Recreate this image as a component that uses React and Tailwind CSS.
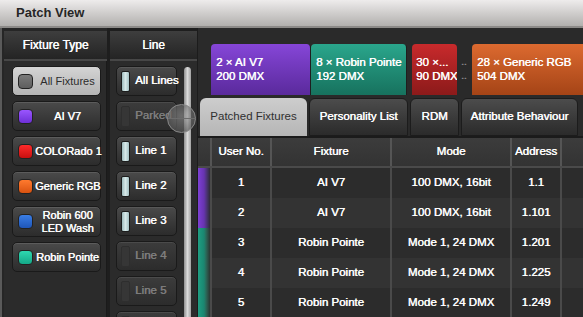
const fixtureTypes = [
  { name: 'All Fixtures', swatch: 'from-[#7a7a7a] to-[#5e5e5e]', active: true },
  { name: 'AI V7', swatch: 'from-[#9a55ff] to-[#6e2fd6]' },
  { name: 'COLORado 1', swatch: 'from-[#ff2a2a] to-[#c80f0f]' },
  { name: 'Generic RGB', swatch: 'from-[#ff7a2e] to-[#d9520f]' },
  { name: ['Robin 600', 'LED Wash'], swatch: 'from-[#3a7ee6] to-[#1f56b8]' },
  { name: 'Robin Pointe', swatch: 'from-[#2ed8b0] to-[#14a888]' },
]

const lines = [
  { name: 'All Lines', on: true },
  { name: 'Parked' },
  { name: 'Line 1', on: true },
  { name: 'Line 2', on: true },
  { name: 'Line 3', on: true },
  { name: 'Line 4' },
  { name: 'Line 5' },
  { name: '' },
]

const universes = [
  { label: '2 × AI V7', dmx: '200 DMX', w: 'w-[100px]', bg: 'from-[#8646d8] to-[#5a2a9c]' },
  { label: '8 × Robin Pointe', dmx: '192 DMX', w: 'w-[96px]', bg: 'from-[#2aa68c] to-[#17725e]' },
]

const purple = 'from-[#7d40d4] via-[#6733b0] to-[#2f2a36]'
const teal = 'from-[#1f9e82] via-[#1a8670] to-[#2a3532]'

const rows = [
  { no: 1, fixture: 'AI V7', mode: '100 DMX, 16bit', addr: '1.1', strip: purple },
  { no: 2, fixture: 'AI V7', mode: '100 DMX, 16bit', addr: '1.101', strip: purple },
  { no: 3, fixture: 'Robin Pointe', mode: 'Mode 1, 24 DMX', addr: '1.201', strip: teal },
  { no: 4, fixture: 'Robin Pointe', mode: 'Mode 1, 24 DMX', addr: '1.225', strip: teal },
  { no: 5, fixture: 'Robin Pointe', mode: 'Mode 1, 24 DMX', addr: '1.249', strip: teal },
]

// thickens the thin regular face a little, like the console's cleartype text
const heavy = '[text-shadow:0.45px_0_0_currentColor]'

function ColumnHeader({ children }) {
  return (
    <div className={`h-[30px] shrink-0 flex items-center justify-center bg-gradient-to-b from-[#3e3e3e] to-[#242424] border-b-2 border-[#474747] text-white text-[12px] ${heavy}`}>
      {children}
    </div>
  )
}

function FixtureButton({ item }) {
  const twoLine = Array.isArray(item.name)
  return (
    <div
      className={`w-[89px] ${twoLine ? 'h-[31px]' : 'h-[30px]'} shrink-0 rounded-[5px] border border-[#1a1a1a] flex items-center pl-[5px] ${
        item.active
          ? 'bg-gradient-to-b from-[#d4d4d4] to-[#b4b4b4] text-[#2c2c2c]'
          : `bg-gradient-to-b from-[#4a4a4a] to-[#2c2c2c] text-white ${heavy} shadow-[inset_0_1px_0_rgba(255,255,255,0.1)]`
      }`}
    >
      <div className={`w-[15px] h-[15px] shrink-0 rounded-[4px] border border-[#222] bg-gradient-to-b ${item.swatch}`} />
      <div className="flex-1 pl-[2px] text-center text-[11px] leading-[13px] whitespace-nowrap">
        {twoLine ? (
          <>
            <div>{item.name[0]}</div>
            <div>{item.name[1]}</div>
          </>
        ) : (
          item.name
        )}
      </div>
    </div>
  )
}

function LineButton({ item }) {
  return (
    <div
      className={`w-[61px] h-[30px] shrink-0 rounded-[5px] border border-[#1a1a1a] flex items-center pl-[4px] gap-[5px] shadow-[inset_0_1px_0_rgba(255,255,255,0.08)] ${
        item.on ? 'bg-gradient-to-b from-[#4a4a4a] to-[#2c2c2c] text-white' : 'bg-gradient-to-b from-[#3c3c3c] to-[#2c2c2c] text-[#7e7e7e]'
      }`}
    >
      <div
        className={`w-[9px] h-[21px] shrink-0 rounded-[2px] border ${
          item.on ? 'border-[#1c1c1c] bg-gradient-to-r from-[#9fbcbe] via-[#d6e8e8] to-[#a3c0c3]' : 'border-[#2e2e2e] bg-[#363636]'
        }`}
      />
      <span className={`text-[11.5px] whitespace-nowrap ${heavy}`}>{item.name}</span>
    </div>
  )
}

export default function App() {
  return (
    <div className="w-[583px] h-[317px] overflow-hidden bg-[#2b2b2b] font-['Liberation_Sans',Arial,sans-serif] flex flex-col">
      <div className="h-[28px] shrink-0 flex items-center pl-[16px] bg-gradient-to-b from-[#eeecec] to-[#b2b0ae] border-b-2 border-[#8c8a88] text-[13px] font-bold text-[#262626]">
        Patch View
      </div>

      <div className="flex flex-1 min-h-0">
        {/* fixture types */}
        <div className="w-[107px] shrink-0 flex flex-col border-l-[2px] border-[#5a5a5a] pl-[2px] pt-[3px] bg-[#262626]">
          <ColumnHeader>Fixture Type</ColumnHeader>
          <div className="flex-1 bg-[#2b2b2b] flex flex-col gap-[5px] pt-[5px] pl-[8px] border-r border-[#1a1a1a]">
            {fixtureTypes.map((f, i) => (
              <FixtureButton key={i} item={f} />
            ))}
          </div>
        </div>

        {/* lines */}
        <div className="w-[90px] shrink-0 flex flex-col pl-[3px] pt-[3px] bg-[#1e1e1e] relative">
          <ColumnHeader>Line</ColumnHeader>
          <div className="flex-1 bg-[#2b2b2b] flex pl-[6px] pt-[5px] min-h-0">
            <div className="flex flex-col gap-[5px]">
              {lines.map((l, i) => (
                <LineButton key={i} item={l} />
              ))}
            </div>
            <div className="ml-[7px] mt-[1px] w-[7px] rounded-t-[4px] bg-gradient-to-r from-[#8f8f8f] via-[#dadada] to-[#a2a2a2]" />
          </div>
          <div className="absolute left-[60px] top-[76px] w-[29px] h-[29px] rounded-full border border-[#8a8a8a] bg-[radial-gradient(circle_at_50%_40%,rgba(170,170,170,0.5),rgba(70,70,70,0.75))] flex items-center">
            <div className="w-full h-[1px] bg-[#6c6c6c]" />
          </div>
        </div>

        {/* patch area */}
        <div className="flex-1 min-w-0 flex flex-col bg-[#2a2a2a] border-l border-[#1c1c1c]">
          <div className="h-[69px] shrink-0 flex items-end pl-[13px] pb-[2px]">
            <div className={`flex h-[51px] items-stretch text-white text-[11.5px] leading-[14px] ${heavy}`}>
              {universes.map((u, i) => (
                <div key={i} className={`${u.w} rounded-t-[4px] bg-gradient-to-b ${u.bg} pl-[5px] pt-[11px] whitespace-nowrap overflow-hidden border-r border-[#1e1e1e]`}>
                  <div>{u.label}</div>
                  <div>{u.dmx}</div>
                </div>
              ))}
              <div className="w-[45px] ml-[5px] rounded-t-[4px] bg-gradient-to-b from-[#c82a2c] to-[#8c1a1a] pl-[4px] pt-[11px] whitespace-nowrap overflow-hidden">
                <div>30 ×...</div>
                <div>90 DMX</div>
              </div>
              <div className="w-[15px] text-[#8a8a8a] text-[10px] pt-[11px] pl-[4px]">
                <div>..</div>
                <div>..</div>
              </div>
              <div className="w-[120px] rounded-tl-[4px] bg-gradient-to-b from-[#dc6a30] to-[#a54416] pl-[5px] pt-[11px] whitespace-nowrap">
                <div>28 × Generic RGB</div>
                <div>504 DMX</div>
              </div>
            </div>
          </div>

          {/* tabs */}
          <div className="h-[41px] shrink-0 flex gap-[2px] pl-[2px] pt-[1px] border-b-2 border-[#1b1b1b] text-[11.5px]">
            <div className="w-[107px] rounded-t-[6px] bg-gradient-to-b from-[#cdcdcd] to-[#b6b6b6] flex items-center justify-center text-[#303030]">
              Patched Fixtures
            </div>
            <div className={`w-[99px] rounded-t-[6px] border border-[#1c1c1c] bg-gradient-to-b from-[#4c4c4c] to-[#2b2b2b] flex items-center justify-center text-white ${heavy}`}>
              Personality List
            </div>
            <div className={`w-[49px] rounded-t-[6px] border border-[#1c1c1c] bg-gradient-to-b from-[#4c4c4c] to-[#2b2b2b] flex items-center justify-center text-white ${heavy}`}>
              RDM
            </div>
            <div className={`w-[117px] rounded-t-[6px] border border-[#1c1c1c] bg-gradient-to-b from-[#4c4c4c] to-[#2b2b2b] flex items-center justify-center text-white ${heavy}`}>
              Attribute Behaviour
            </div>
          </div>

          {/* table */}
          <div className={`flex-1 min-h-0 flex flex-col text-white text-[11.5px] ${heavy}`}>
            <div className="h-[30px] shrink-0 flex bg-gradient-to-b from-[#3c3c3c] to-[#333333] border-b-2 border-[#4a4a4a]">
              <div className="w-[14px] border-r-2 border-[#555]" />
              <div className="w-[60px] border-r-2 border-[#555] flex items-center justify-center">User No.</div>
              <div className="w-[120px] border-r-2 border-[#555] flex items-center justify-center">Fixture</div>
              <div className="w-[120px] border-r-2 border-[#555] flex items-center justify-center">Mode</div>
              <div className="w-[50px] border-r-2 border-[#555] flex items-center justify-center">Address</div>
              <div className="flex-1" />
            </div>
            {rows.map((r, i) => (
              <div key={r.no} className={`h-[30px] shrink-0 flex ${i % 2 ? 'bg-[#333333]' : 'bg-[#2c2c2c]'}`}>
                <div className={`w-[14px] border-r-2 border-[#4a4a4a] bg-gradient-to-r ${r.strip}`} />
                <div className="w-[60px] border-r-2 border-[#4a4a4a] flex items-center justify-center">{r.no}</div>
                <div className="w-[120px] border-r-2 border-[#4a4a4a] flex items-center justify-center">{r.fixture}</div>
                <div className="w-[120px] border-r-2 border-[#4a4a4a] flex items-center justify-center">{r.mode}</div>
                <div className="w-[50px] border-r-2 border-[#4a4a4a] flex items-center justify-center">{r.addr}</div>
                <div className="flex-1" />
              </div>
            ))}
          </div>
        </div>
      </div>
    </div>
  )
}
